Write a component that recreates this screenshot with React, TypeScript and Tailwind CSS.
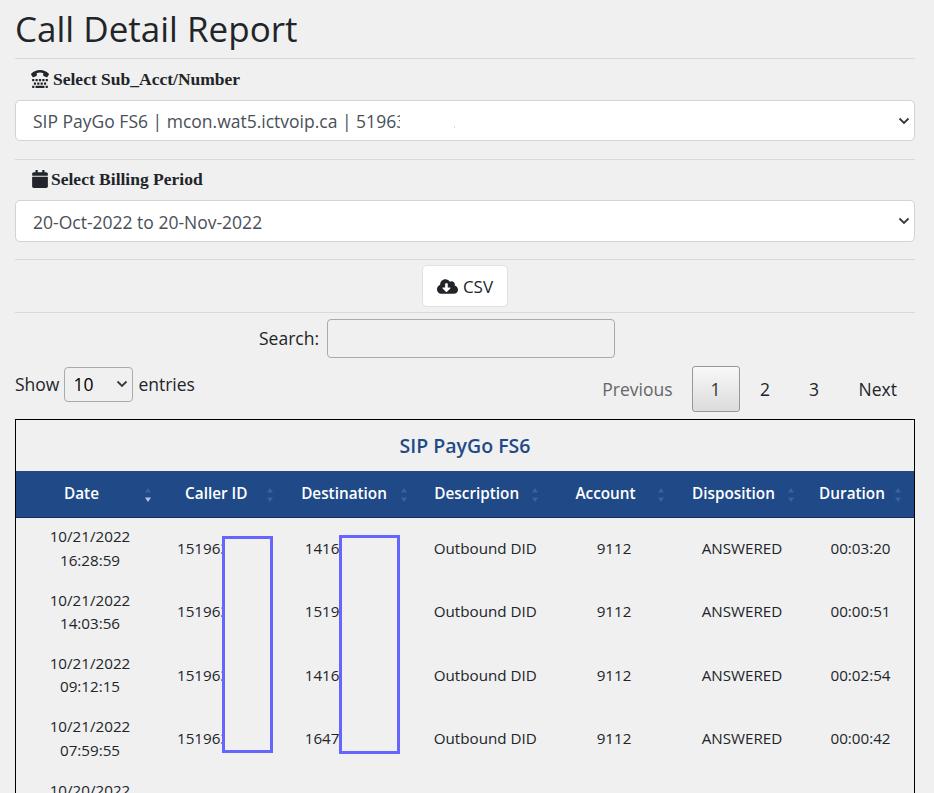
import React from "react";
import { FaCalendar, FaCloudDownloadAlt, FaTty } from "react-icons/fa";

const rows = [
	{ date: "10/21/2022", time: "16:28:59", caller: "15196300000", dest: "14160000002", dur: "00:03:20" },
	{ date: "10/21/2022", time: "14:03:56", caller: "15196300000", dest: "15190000000", dur: "00:00:51" },
	{ date: "10/21/2022", time: "09:12:15", caller: "15196300000", dest: "14160000002", dur: "00:02:54" },
	{ date: "10/21/2022", time: "07:59:55", caller: "15196300000", dest: "16470000002", dur: "00:00:42" },
	{ date: "10/20/2022", time: "18:41:07", caller: "15196300000", dest: "15190000000", dur: "00:01:12" },
];

const columns = [
	{ name: "Date", width: "w-[148px]", active: true },
	{ name: "Caller ID", width: "w-[121.5px]" },
	{ name: "Destination", width: "w-[134px]" },
	{ name: "Description", width: "w-[131.5px]" },
	{ name: "Account", width: "w-[126px]" },
	{ name: "Disposition", width: "w-[130px]" },
	{ name: "Duration", width: "w-[107px]" },
];

const SortArrows = ({ active }: { active?: boolean }) => (
	<svg width="8" height="16" viewBox="0 0 8 16" className="absolute right-[12px] top-[16px]">
		<path d="M4 1 L7 5.5 L1 5.5 Z" fill="#3f6296" />
		<path d="M4 15 L7 10.5 L1 10.5 Z" fill={active ? "#b4c4dc" : "#3f6296"} />
	</svg>
);

const Chevron = () => (
	<svg width="12" height="8" viewBox="0 0 12 8" className="pointer-events-none absolute right-[5px] top-1/2 -translate-y-1/2">
		<path d="M1.5 1.5 L6 6 L10.5 1.5" fill="none" stroke="#343a40" strokeWidth="1.8" />
	</svg>
);

const App = () => {
	return (
		<div className="h-[793px] overflow-hidden bg-[#f0f0f0] pl-[15px] pr-[19px] font-['Open_Sans',sans-serif] text-[#212529]">
			<h1 className="h-[58px] pt-[7px] text-[35px] leading-[44px]">Call Detail Report</h1>
			<hr className="border-[#d9d9d9]" />

			<label className="mt-[10px] flex h-[20px] items-center gap-[4px] pl-[16px] font-['Liberation_Serif',serif] text-[17.5px] font-bold">
				<FaTty size={18} />
				Select Sub_Acct/Number
			</label>
			<div className="relative mt-[11px]">
				<select className="h-[41px] w-full appearance-none rounded-[5px] border border-[#ced4da] bg-white pl-[17px] pt-[2px] text-[17.5px] text-[#495057]">
					<option>SIP PayGo FS6 | mcon.wat5.ictvoip.ca | 51963000000</option>
				</select>
				<Chevron />
				{/* number blanked out in the screenshot */}
				<div className="absolute left-[385px] top-[8px] h-[26px] w-[120px] bg-white" />
				<div className="absolute left-[439px] top-[26px] h-[2px] w-[1px] bg-[#bfe0ff]" />
			</div>
			<hr className="mt-[18px] border-[#d9d9d9]" />

			<label className="mt-[9px] flex h-[20px] items-center gap-[2px] pl-[16px] font-['Liberation_Serif',serif] text-[17.5px] font-bold">
				<FaCalendar size={18} />
				Select Billing Period
			</label>
			<div className="relative mt-[11px]">
				<select className="h-[42px] w-full appearance-none rounded-[5px] border border-[#ced4da] bg-white pl-[17px] pt-[2px] text-[17.5px] text-[#495057]">
					<option>20-Oct-2022 to 20-Nov-2022</option>
				</select>
				<Chevron />
			</div>
			<hr className="mt-[17px] border-[#d9d9d9]" />

			<div className="flex h-[52px] items-center justify-center">
				<button className="flex h-[42px] w-[86px] items-center justify-center gap-[5px] rounded-[5px] border border-[#dee2e6] bg-white pt-[1px] text-[17px]">
					<FaCloudDownloadAlt size={21} />
					CSV
				</button>
			</div>
			<hr className="border-[#d9d9d9]" />

			<div className="mt-[6px] flex h-[39px] items-center pl-[244px] text-[17.5px]">
				<span>Search:</span>
				<input className="ml-[8px] h-[39px] w-[288px] rounded-[4px] border border-[#aaaaaa] bg-transparent" />
			</div>

			<div className="mt-[8px] flex h-[46px] justify-between">
				<div className="flex h-[36px] items-center text-[17.5px]">
					<span>Show</span>
					<div className="relative mx-[5px]">
						<select className="block h-[35px] w-[69px] appearance-none rounded-[4px] border border-[#aaaaaa] bg-transparent pl-[8px] text-[17.5px] text-black">
							<option>10</option>
						</select>
						<Chevron />
					</div>
					<span>entries</span>
				</div>
				<div className="flex items-center text-[17.5px]">
					<span className="pr-[19px] text-[#666666]">Previous</span>
					<span className="mr-[1px] flex h-[46px] w-[48px] items-center justify-center rounded-[3px] border border-[#979797] bg-gradient-to-b from-[#f8f8f8] to-[#dcdcdc] text-[#333333]">
						1
					</span>
					<span className="w-[49px] text-center">2</span>
					<span className="w-[49px] text-center">3</span>
					<span className="pl-[20px] pr-[18px]">Next</span>
				</div>
			</div>

			<div className="relative mt-[7px] border border-black">
				<div className="flex h-[51px] items-center justify-center text-[19.5px] font-semibold text-[#1f4a87]">
					SIP PayGo FS6
				</div>
				<table className="w-full table-fixed border-collapse text-center text-[15.2px] leading-[23.5px]">
					<thead>
						<tr className="h-[46px] border-b border-[#13305c] bg-[#1f4a87] text-[15.3px] text-white">
							{columns.map((col) => (
								<th key={col.name} className={`relative pr-[17px] font-semibold ${col.width}`}>
									{col.name}
									<SortArrows active={col.active} />
								</th>
							))}
						</tr>
					</thead>
					<tbody>
						{rows.map((row) => (
							<tr key={row.time} className="h-[63.4px]">
								<td>
									{row.date}
									<br />
									{row.time}
								</td>
								<td>{row.caller}</td>
								<td>{row.dest}</td>
								<td>Outbound DID</td>
								<td>9112</td>
								<td>ANSWERED</td>
								<td>{row.dur}</td>
							</tr>
						))}
					</tbody>
				</table>
				{/* redaction boxes drawn over the numbers */}
				<div className="absolute left-[206px] top-[116px] h-[217px] w-[51px] border-[3px] border-[#6666ff] bg-[#f0f0f0]" />
				<div className="absolute left-[323px] top-[115px] h-[219px] w-[61px] border-[3px] border-[#6666ff] bg-[#f0f0f0]" />
			</div>
		</div>
	);
};

export default App;
